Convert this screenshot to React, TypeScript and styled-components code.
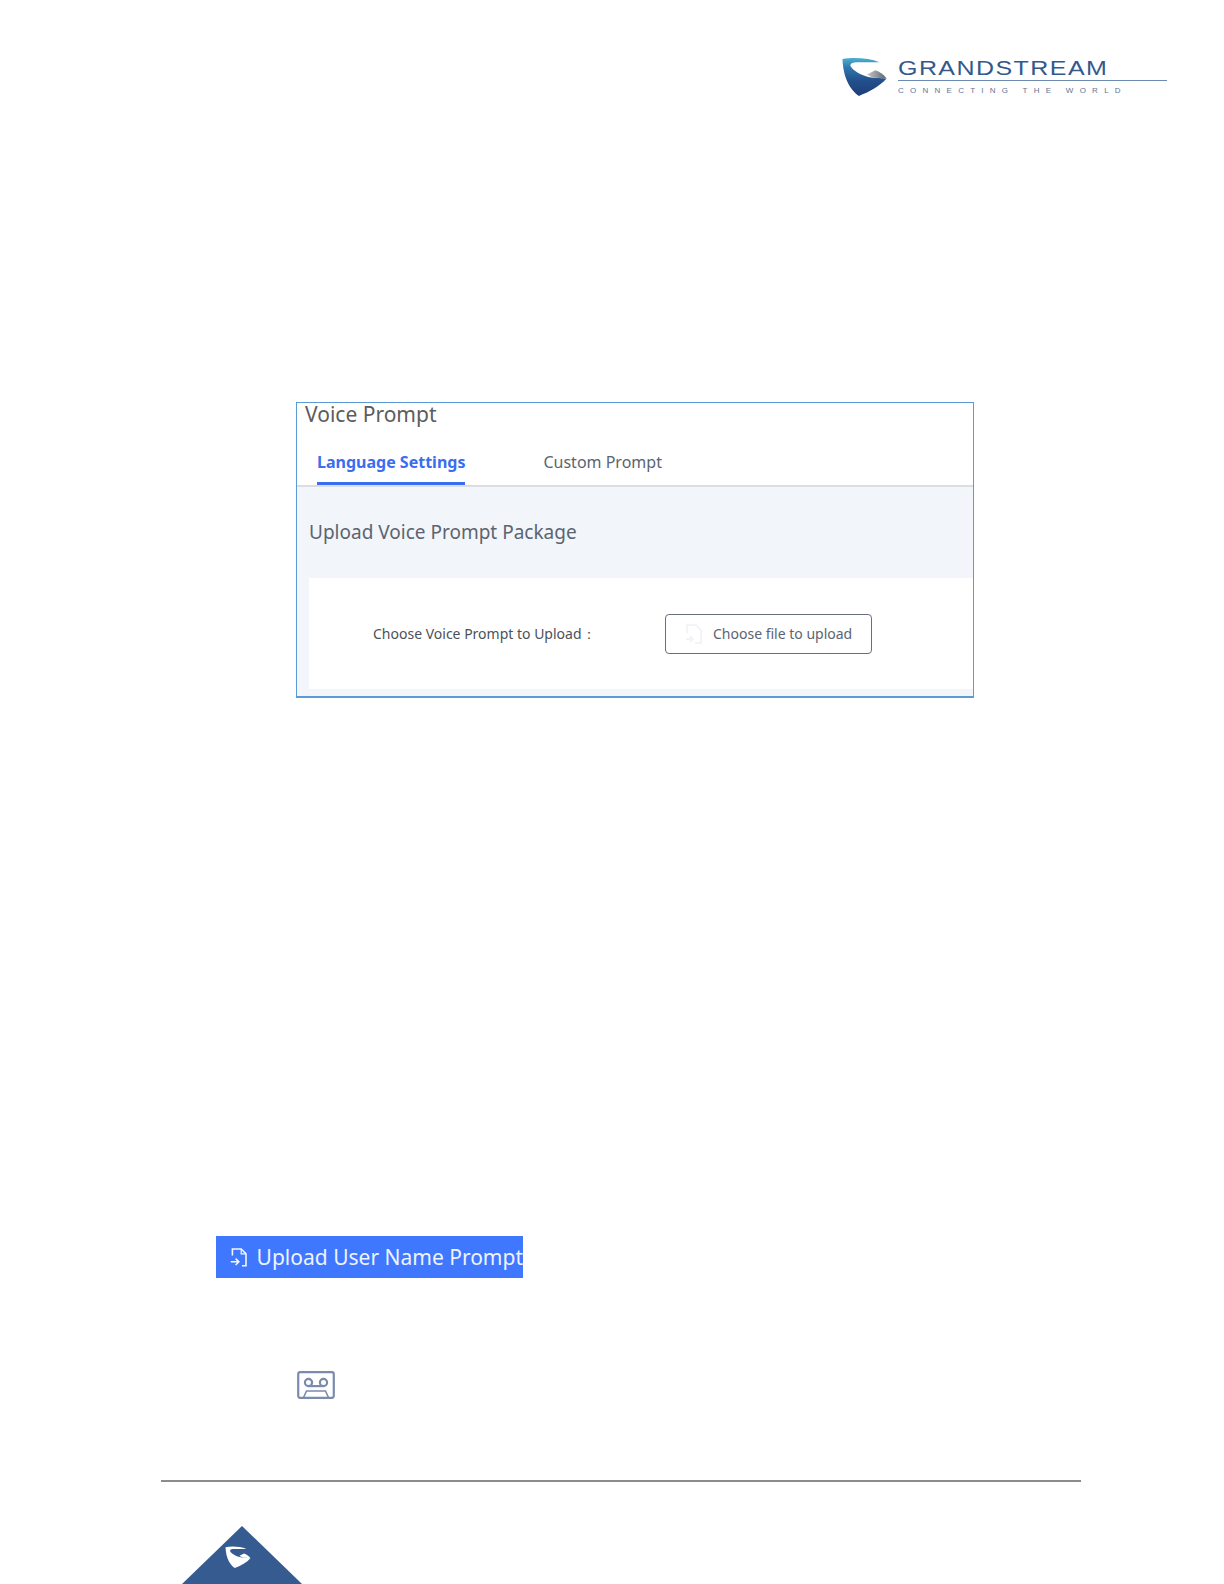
import styled, { createGlobalStyle } from "styled-components";

const GlobalStyle = createGlobalStyle`
  html, body {
    margin: 0;
    padding: 0;
    background: #fff;
  }
  body {
    font-family: "Noto Sans", "Open Sans", sans-serif;
  }
`;

const Page = styled.div`
  width: 1224px;
  height: 1584px;
  overflow: hidden;
  display: flex;
  flex-direction: column;
`;

const Header = styled.header`
  display: flex;
  justify-content: flex-end;
  align-items: flex-start;
  gap: 10px;
  height: 345px;
  padding: 57px 57px 0 0;
`;

const LogoText = styled.div`
  width: 269px;
  display: flex;
  flex-direction: column;
  padding-top: 0;
`;

const Brand = styled.div`
  font-family: "Liberation Sans", sans-serif;
  font-size: 20px;
  line-height: 23px;
  height: 23px;
  color: #33598c;
  white-space: nowrap;
  transform: scaleX(1.25);
  transform-origin: left center;
  letter-spacing: 1.15px;
`;

const BrandRule = styled.div`
  height: 1px;
  background: #6d8bb0;
`;

const Slogan = styled.div`
  font-family: "Liberation Sans", sans-serif;
  font-size: 8px;
  line-height: 10px;
  margin-top: 5px;
  color: #5d7597;
  white-space: nowrap;
  letter-spacing: 6.25px;
`;

const Panel = styled.section`
  align-self: flex-start;
  margin-left: 296px;
  width: 678px;
  height: 297px;
  box-sizing: border-box;
  border: 1px solid #5b9bd5;
  border-bottom-width: 2px;
  display: flex;
  flex-direction: column;
`;

const Title = styled.h1`
  margin: 0;
  padding-left: 8px;
  height: 37px;
  font-size: 21px;
  line-height: 22px;
  font-weight: 400;
  color: #5c5c5c;
`;

const Tabs = styled.nav`
  display: flex;
  gap: 78px;
  height: 47px;
  box-sizing: border-box;
  padding: 9px 0 0 20px;
  border-bottom: 2px solid #d9dee3;
`;

const Tab = styled.div<{ $active?: boolean }>`
  height: 36px;
  box-sizing: border-box;
  font-size: 16px;
  line-height: 26px;
  white-space: nowrap;
  font-weight: ${(p) => (p.$active ? 700 : 400)};
  color: ${(p) => (p.$active ? "#3a6df0" : "#5b6470")};
  border-bottom: ${(p) => (p.$active ? "3px solid #3a6df0" : "none")};
`;

const Body = styled.div`
  flex: 1;
  background: #f2f6fa;
  display: flex;
  flex-direction: column;
  padding: 0 0 7px 12px;
`;

const SectionTitle = styled.h2`
  margin: 0;
  height: 91px;
  display: flex;
  align-items: center;
  font-size: 19px;
  font-weight: 400;
  color: #5b6472;
`;

const Card = styled.div`
  flex: 1;
  background: #fff;
  display: flex;
  align-items: center;
  padding-left: 64px;
`;

const Label = styled.div`
  width: 292px;
  font-size: 14px;
  color: #4c5159;
  white-space: nowrap;
`;

const UploadButton = styled.div`
  width: 207px;
  height: 40px;
  box-sizing: border-box;
  border: 1px solid #66707e;
  border-radius: 4px;
  display: flex;
  align-items: center;
  gap: 11px;
  padding-left: 19px;
  font-size: 14px;
  color: #5b6472;
  white-space: nowrap;
`;

const Spacer = styled.div`
  height: 538px;
`;

const BlueButton = styled.div`
  align-self: flex-start;
  margin-left: 216px;
  width: 307px;
  height: 42px;
  box-sizing: border-box;
  background: #3f78ff;
  color: #eef3ff;
  display: flex;
  align-items: center;
  gap: 9px;
  padding-left: 14px;
  font-size: 21px;
  white-space: nowrap;
`;

const CassetteIcon = styled.svg`
  display: block;
  margin: 93px 0 0 297px;
  width: 38px;
  height: 28px;
`;

const FooterRule = styled.div`
  margin: 81px 0 0 161px;
  width: 920px;
  height: 2px;
  background: #8c8c8c;
`;

const Triangle = styled.svg`
  display: block;
  margin: 44px 0 0 182px;
  width: 120px;
  height: 58px;
  flex-shrink: 0;
`;

const MARK_BODY =
  "M7 10C8 30 15 40 23 46C33 42 43 37 50 29L35 28C25 26 17 21 15 17C14 14 17 13 22 13L43 13C33 9 18 8 7 10Z";
const MARK_TAIL = "M31 25L39 21C43 22 47 25 50 29L36 28Z";

const App = () => (
  <Page>
    <GlobalStyle />
    <Header>
      <svg width="46" height="40" viewBox="7 8 44 39">
        <defs>
          <linearGradient id="markBody" x1="0" y1="0" x2="0" y2="1">
            <stop offset="0" stopColor="#4fb0cf" />
            <stop offset="0.25" stopColor="#2f78ad" />
            <stop offset="0.6" stopColor="#234f8c" />
            <stop offset="1" stopColor="#1c3f78" />
          </linearGradient>
          <linearGradient id="markTail" x1="0" y1="0" x2="1" y2="0">
            <stop offset="0" stopColor="#c4c7ca" />
            <stop offset="1" stopColor="#5f6368" />
          </linearGradient>
        </defs>
        <path d={MARK_BODY} fill="url(#markBody)" />
        <path d={MARK_TAIL} fill="url(#markTail)" />
      </svg>
      <LogoText>
        <Brand>GRANDSTREAM</Brand>
        <BrandRule />
        <Slogan>CONNECTING THE WORLD</Slogan>
      </LogoText>
    </Header>

    <Panel>
      <Title>Voice Prompt</Title>
      <Tabs>
        <Tab $active>Language Settings</Tab>
        <Tab>Custom Prompt</Tab>
      </Tabs>
      <Body>
        <SectionTitle>Upload Voice Prompt Package</SectionTitle>
        <Card>
          <Label>Choose Voice Prompt to Upload：</Label>
          <UploadButton>
            <svg width="17" height="20" viewBox="0 0 17 20" fill="none" stroke="#eef1f5" strokeWidth="1.5">
              <path d="M2 9V1H11L16 6V19H10" />
              <path d="M1 15H8M5 12L8 15L5 18" />
            </svg>
            Choose file to upload
          </UploadButton>
        </Card>
      </Body>
    </Panel>

    <Spacer />

    <BlueButton>
      <svg width="22" height="24" viewBox="0 0 22 24" fill="none" stroke="#f2f6ff" strokeWidth="2">
        <path d="M3 10V2H14L20 8V23H15" />
        <path d="M14 2V8H20" strokeWidth="1.5" />
        <path d="M1 18H11M7 14L11 18L7 22" />
      </svg>
      Upload User Name Prompt
    </BlueButton>

    <CassetteIcon viewBox="0 0 38 28" fill="none" stroke="#7a8bac" strokeWidth="2.2">
      <rect x="1.2" y="1.2" width="35.6" height="25.6" rx="2" />
      <circle cx="11.5" cy="11.5" r="3.6" />
      <circle cx="26.5" cy="11.5" r="3.6" />
      <path d="M11.5 15.1H26.5" />
      <path d="M6.5 26.5L9.5 20H28.5L31.5 26.5" strokeWidth="1.6" />
    </CassetteIcon>

    <FooterRule />

    <Triangle viewBox="0 0 120 58">
      <path d="M60 0L120 58H0Z" fill="#365b91" />
      <g transform="translate(43.5 20) scale(0.58) translate(-7 -8)">
        <path d={MARK_BODY} fill="#fff" />
        <path d={MARK_TAIL} fill="#fff" />
      </g>
    </Triangle>
  </Page>
);

export default App;
